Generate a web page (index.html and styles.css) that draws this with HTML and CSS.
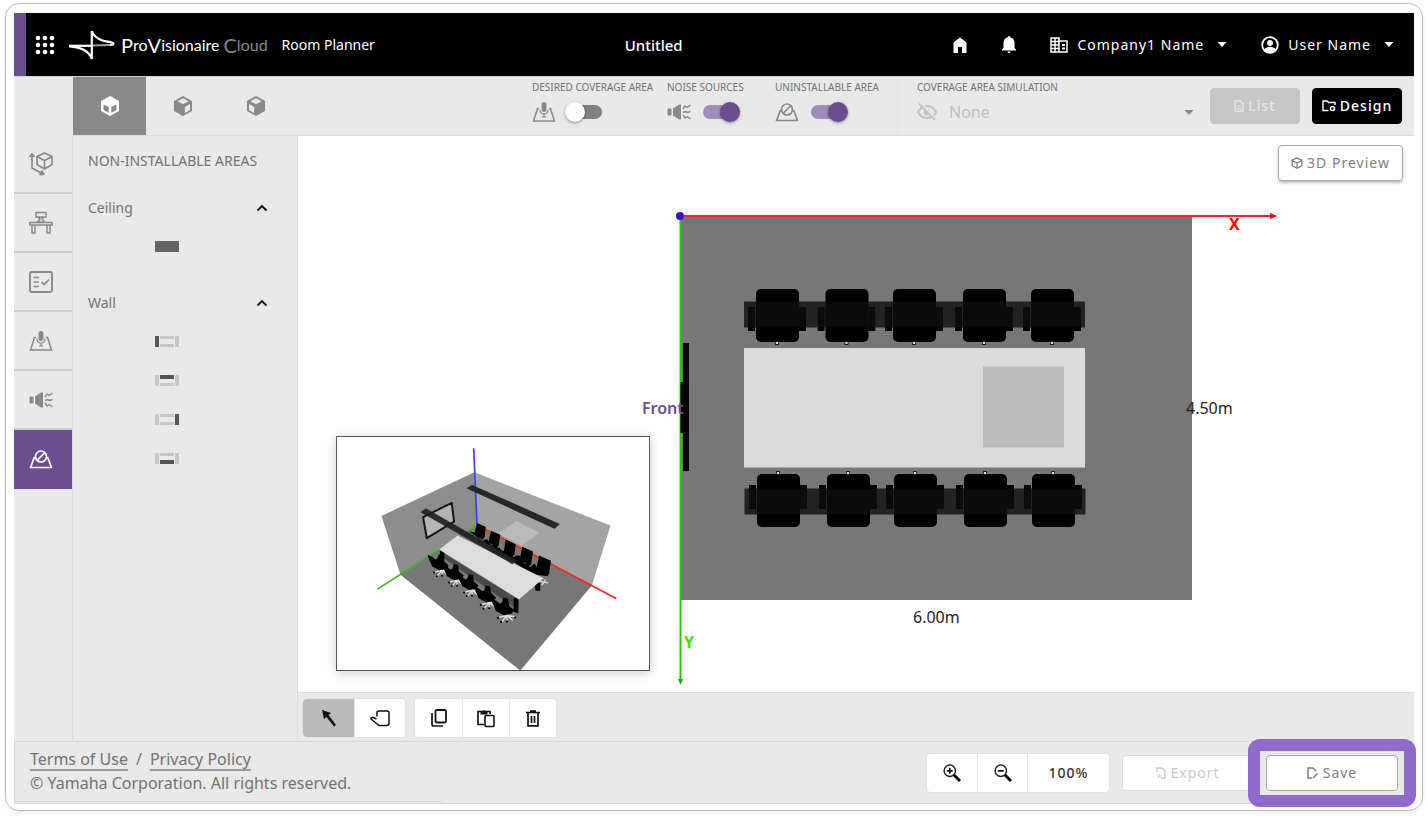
FILE: index.html
```html
<!DOCTYPE html>
<html lang="en">
<head>
<meta charset="utf-8">
<title>Room Planner</title>
<link rel="stylesheet" href="styles.css">
</head>
<body>
<svg class="sprite" aria-hidden="true">
  <symbol id="mic" viewBox="0 0 24 24"><path d="M7 8.500H5.500L1.500 21h21L18.500 8.500H17" fill="none" stroke="currentColor" stroke-width="1.500"/><rect x="9.500" y="2" width="5" height="10" rx="2.500" fill="currentColor"/><path d="M8 9.500c0 6 8 6 8 0M12 14v3M10 17h4" fill="none" stroke="currentColor" stroke-width="1.200"/></symbol>
  <symbol id="noise" viewBox="0 0 24 24"><rect x="0.500" y="8.500" width="4" height="7" rx="1" fill="currentColor"/><path d="M6 8.500L12 4.500h2v15h-2L6 15.500z" fill="currentColor"/><path d="M16 9l2-3 2 1.500L23.500 5M16 12.500l2.500-1 2 1 3-1M16 15l2 3 2-1.500 3.500 2.500" fill="none" stroke="currentColor" stroke-width="1.400"/></symbol>
  <symbol id="blocked" viewBox="0 0 24 24"><path d="M5.500 10L1.500 20.500h21L18.500 10" fill="none" stroke="currentColor" stroke-width="1.700" stroke-linejoin="round"/><circle cx="12" cy="9.500" r="5.500" fill="none" stroke="currentColor" stroke-width="1.700"/><path d="M8.500 13L15.500 6" stroke="currentColor" stroke-width="1.700"/></symbol>
  <symbol id="axes" viewBox="0 0 24 24"><g fill="none" stroke="currentColor" stroke-width="1.600" stroke-linejoin="round"><path d="M15.500 1l7.500 3.500v8L15.500 17 8 12.500v-8zM8 4.500l7.500 4 7.500-4M15.500 8.500V17M3 3v13l11 6"/><path d="M0.500 4.500L3 1l2.500 3.500zM13 18.500l2.500 4-5 .5z" fill="currentColor" stroke-width="1"/></g></symbol>
  <symbol id="desk" viewBox="0 0 24 24"><g fill="none" stroke="currentColor" stroke-width="1.500" stroke-linejoin="round"><path d="M7 1.500h10v4.500H7zM9 6l2 2-2.500 3h7L13 8l2-2M.8 11.500h22.400v2.500H.8zM3 14h3v8H3zM18 14h3v8h-3z"/></g></symbol>
  <symbol id="check" viewBox="0 0 24 24"><rect x="1" y="2" width="22" height="20" rx="1.500" fill="none" stroke="currentColor" stroke-width="1.900"/><path d="M4.500 7.500H10M4.500 12H10M4.500 16.500H10M12.500 12l2.500 2.500 5-5" fill="none" stroke="currentColor" stroke-width="1.700"/></symbol>
  <symbol id="cube-top" viewBox="0 0 20 20"><path d="M10 0l9 5v10l-9 5-9-5V5z" fill="currentColor"/><path d="M3.500 8.500l5.200 2.600v5.700L3.500 14zM16.500 8.500l-5.200 2.600v5.700l5.200-2.800z" fill="#898989"/></symbol>
  <symbol id="cube-left" viewBox="0 0 20 20"><path d="M10 0l9 5v10l-9 5-9-5V5z" fill="currentColor"/><path d="M10 2.200L15.500 5.300 10 8.200 4.500 5.300zM17 8v6.200l-5.200 2.800v-6z" fill="#e9e9e9"/></symbol>
  <symbol id="cube-right" viewBox="0 0 20 20"><path d="M10 0l9 5v10l-9 5-9-5V5z" fill="currentColor"/><path d="M10 2.200L15.500 5.300 10 8.200 4.500 5.300zM3 8v6.200l5.200 2.800v-6z" fill="#e9e9e9"/></symbol>
  <symbol id="wall-left" viewBox="0 0 24 11"><path d="M5 0h14v3H5zM5 8h14v3H5zM20 0h4v11h-4z" fill="#c8c8c8"/><path d="M0 0h4v11H0z" fill="#555"/></symbol>
  <symbol id="wall-top" viewBox="0 0 24 11"><path d="M0 0h4v11H0zM5 8h14v3H5zM20 0h4v11h-4z" fill="#c8c8c8"/><path d="M5 0h14v4H5z" fill="#555"/></symbol>
  <symbol id="wall-right" viewBox="0 0 24 11"><path d="M0 0h4v11H0zM5 0h14v3H5zM5 8h14v3H5z" fill="#c8c8c8"/><path d="M20 0h4v11h-4z" fill="#555"/></symbol>
  <symbol id="wall-bottom" viewBox="0 0 24 11"><path d="M0 0h4v11H0zM5 0h14v3H5zM20 0h4v11h-4z" fill="#c8c8c8"/><path d="M5 7h14v4H5z" fill="#555"/></symbol>
  <symbol id="chevron" viewBox="0 0 12 8"><path d="M1.500 6.500L6 2l4.500 4.500" fill="none" stroke="#111" stroke-width="1.900"/></symbol>
  <symbol id="caret" viewBox="0 0 10 5"><path d="M0.500 0h9L5 5z" fill="currentColor"/></symbol>
  <symbol id="chair" viewBox="0 0 58 56"><path d="M0 18h7v24H0zM51 18h7v24h-7z"/><rect x="8" width="43" height="53" rx="5"/><circle cx="29" cy="54.500" r="2"/><circle cx="29" cy="54" r="1.300" fill="#ddd"/></symbol>
  <symbol id="seat3d" viewBox="0 0 72 76"><path d="M46 48v20M46 54L24 60M46 54l22 4M46 54L32 72M46 54l16 14" fill="none" stroke="#ddd" stroke-width="4"/><path d="M2 8l14 6 10 8 6-2 4-14 12 2 4 20 14 12-8 10-20 4-22-12L8 24z"/><g><circle cx="22" cy="61" r="3"/><circle cx="30" cy="72" r="3"/><circle cx="46" cy="71" r="3"/><circle cx="68" cy="60" r="3"/></g></symbol>
</svg>

<div class="frame">
  <header class="header">
    <div class="brand">
      <button class="plain" aria-label="Apps"><svg width="20" height="20" viewBox="0 0 20 20" fill="#fff"><circle cx="3" cy="3" r="2.300"/><circle cx="10" cy="3" r="2.300"/><circle cx="17" cy="3" r="2.300"/><circle cx="3" cy="10" r="2.300"/><circle cx="10" cy="10" r="2.300"/><circle cx="17" cy="10" r="2.300"/><circle cx="3" cy="17" r="2.300"/><circle cx="10" cy="17" r="2.300"/><circle cx="17" cy="17" r="2.300"/></svg></button>
      <svg class="mark" width="46" height="32" viewBox="0 0 46 32" fill="none" stroke="#fff"><path d="M23 16.500L41 16" stroke="#999" stroke-width="2"/><path d="M0 17.300C10 18 20 20.500 22.800 30V2C25.500 10 34 12 42 13.200C45.500 14 45.500 15.600 41 16" stroke-width="2.200" stroke-linejoin="bevel"/><path d="M0 16.800h23" stroke-width="2.200"/></svg>
      <span class="logo"><span class="logo-name"><b>P</b>ro<b>V</b>isionaire</span><span class="logo-cloud"><b>C</b>loud</span></span>
      <span class="product">Room Planner</span>
    </div>
    <h1 class="title">Untitled</h1>
    <nav class="account">
      <button class="plain" aria-label="Home"><svg width="16" height="16" viewBox="0 0 16 16"><path d="M8 0.500l6.500 5V16h-4.500v-6H6v6H1.500V5.500z" fill="#fff"/></svg></button>
      <button class="plain" aria-label="Notifications"><svg width="14" height="18" viewBox="0 0 14 18"><path d="M5.500 1.500a1.500 1.500 0 0 1 3 0c3 .8 4 3 4 5.500v5l1.500 1.500v1H0v-1L1.500 12V7c0-2.500 1-4.700 4-5.500zM5.500 15.500h3a1.500 1.500 0 0 1-3 0z" fill="#fff"/></svg></button>
      <button class="plain company"><svg width="18" height="16" viewBox="0 0 18 16"><path d="M1 1h8v14H1zM9 4h8v11H9M1 4.500h8M1 8h8M1 11.500h8M5 1v14" fill="none" stroke="#fff" stroke-width="1.500"/><path d="M12 7h3v2h-3zM12 10.500h3v2h-3z" fill="#fff"/></svg><span>Company1 Name</span><svg width="10" height="5"><use href="#caret"/></svg></button>
      <button class="plain user"><svg width="18" height="18" viewBox="0 0 18 18"><circle cx="9" cy="9" r="7.800" fill="none" stroke="#fff" stroke-width="1.800"/><circle cx="9" cy="7" r="2.900" fill="#fff"/><path d="M3 13.500c3-3.600 9-3.600 12 0-3 4-9 4-12 0z" fill="#fff"/></svg><span>User Name</span><svg width="10" height="5"><use href="#caret"/></svg></button>
    </nav>
  </header>

  <div class="toolbar">
    <div class="views">
      <button class="view active" aria-label="Top view"><svg width="20" height="20"><use href="#cube-top"/></svg></button>
      <button class="view" aria-label="Left view"><svg width="20" height="20"><use href="#cube-left"/></svg></button>
      <button class="view" aria-label="Right view"><svg width="20" height="20"><use href="#cube-right"/></svg></button>
    </div>
    <div class="switches">
      <div class="field"><label for="coverage">DESIRED COVERAGE AREA</label><div class="control"><svg width="24" height="24"><use href="#mic"/></svg><input class="switch" type="checkbox" id="coverage"></div></div>
      <div class="field"><label for="sources">NOISE SOURCES</label><div class="control"><svg width="24" height="24"><use href="#noise"/></svg><input class="switch" type="checkbox" id="sources" checked></div></div>
      <div class="field"><label for="area">UNINSTALLABLE AREA</label><div class="control"><svg width="24" height="24"><use href="#blocked"/></svg><input class="switch" type="checkbox" id="area" checked></div></div>
    </div>
    <div class="outputs">
      <div class="field simulation"><label for="sim">COVERAGE AREA SIMULATION</label><div class="control"><svg class="dim" width="20" height="18" viewBox="0 0 20 18"><path d="M1 9c4-8 14-8 18 0-4 8-14 8-18 0z" fill="none" stroke="currentColor" stroke-width="2.400"/><circle cx="10" cy="9" r="3.500" fill="currentColor"/><path d="M3 0l16 16" stroke="#e9e9e9" stroke-width="3"/><path d="M2 0.500l16 16.500" stroke="currentColor" stroke-width="2"/></svg><select id="sim" disabled><option>None</option></select><svg width="10" height="5"><use href="#caret"/></svg></div></div>
      <button class="btn list" disabled><svg width="10" height="12" viewBox="0 0 10 12"><path d="M1 1h5l3 3v7H1z" fill="none" stroke="currentColor" stroke-width="1.500"/><path d="M3 6h4M3 8.500h4" stroke="currentColor"/></svg>List</button>
      <button class="btn design"><svg width="14" height="12" viewBox="0 0 14 12"><path d="M6.500 10.500H1V1h4l1.500 1.500H13V5" fill="none" stroke="currentColor" stroke-width="1.400"/><circle cx="10.500" cy="8.500" r="2" fill="none" stroke="currentColor" stroke-width="1.500"/></svg>Design</button>
    </div>
  </div>

  <main class="workspace">
    <nav class="rail">
      <button class="rail-item" aria-label="Room"><svg width="24" height="24"><use href="#axes"/></svg></button>
      <button class="rail-item" aria-label="Furniture"><svg width="24" height="24"><use href="#desk"/></svg></button>
      <button class="rail-item" aria-label="Requirements"><svg width="24" height="24"><use href="#check"/></svg></button>
      <button class="rail-item" aria-label="Coverage"><svg width="24" height="24"><use href="#mic"/></svg></button>
      <button class="rail-item" aria-label="Noise"><svg width="24" height="24"><use href="#noise"/></svg></button>
      <button class="rail-item active" aria-label="Non-installable areas"><svg width="24" height="24"><use href="#blocked"/></svg></button>
    </nav>

    <aside class="panel">
      <h2>NON-INSTALLABLE AREAS</h2>
      <section>
        <button class="plain fold"><span>Ceiling</span><svg width="12" height="8"><use href="#chevron"/></svg></button>
        <button class="plain shape" aria-label="Ceiling area"><svg width="24" height="11" viewBox="0 0 24 11"><path d="M0 0h24v11H0z" fill="#636363"/></svg></button>
      </section>
      <section>
        <button class="plain fold"><span>Wall</span><svg width="12" height="8"><use href="#chevron"/></svg></button>
        <button class="plain shape" aria-label="Left wall"><svg width="24" height="11"><use href="#wall-left"/></svg></button>
        <button class="plain shape" aria-label="Back wall"><svg width="24" height="11"><use href="#wall-top"/></svg></button>
        <button class="plain shape" aria-label="Right wall"><svg width="24" height="11"><use href="#wall-right"/></svg></button>
        <button class="plain shape" aria-label="Front wall"><svg width="24" height="11"><use href="#wall-bottom"/></svg></button>
      </section>
    </aside>

    <div class="stage">
      <div class="canvas">
        <svg class="plan" viewBox="298 136 1116 556">
          <path d="M680 216h512v384H680z" fill="#777"/>
          <path d="M680 216h590" stroke="#f22" stroke-width="2"/><path d="M1270 213l7 3-7 3z" fill="#f00"/>
          <path d="M680.500 216v464" stroke="#2fc01c" stroke-width="2"/><path d="M678 679h5l-2.500 6z" fill="#20b010"/>
          <circle cx="680" cy="216" r="4" fill="#4010c8"/>
          <path d="M683 343h6v128h-6V433h-2.500v-51H683z"/>
          <path d="M744 348h341v119.500H744z" fill="#dbdbdb"/><path d="M983 366.500h81v81h-81z" fill="#bbb"/>
          <use href="#chair" x="748" y="289" width="58" height="56"/>
          <use href="#chair" x="817.500" y="289" width="58" height="56"/>
          <use href="#chair" x="885" y="289" width="58" height="56"/>
          <use href="#chair" x="955" y="289" width="58" height="56"/>
          <use href="#chair" x="1023" y="289" width="58" height="56"/>
          <g transform="matrix(1 0 0 -1 0 816)">
            <use href="#chair" x="749" y="289" width="58" height="56"/>
            <use href="#chair" x="819" y="289" width="58" height="56"/>
            <use href="#chair" x="886" y="289" width="58" height="56"/>
            <use href="#chair" x="956" y="289" width="58" height="56"/>
            <use href="#chair" x="1024" y="289" width="58" height="56"/>
          </g>
          <path d="M744 301.500h341v26H744zM744.500 488.500h341v26h-341z" fill="#0c0e0d" opacity=".8"/>
          <text x="642" y="414" class="front">Front</text>
          <text x="1186" y="414" class="size">4.50m</text>
          <text x="913" y="623" class="size">6.00m</text>
          <text x="1229" y="230" class="axis-x">X</text>
          <text x="684" y="648" class="axis-y">Y</text>
        </svg>

        <svg class="preview" viewBox="50 36 936 700">
          <path d="M183 273L462 142 470 300 240 450z" fill="#8d8d8d"/>
          <path d="M462 142L871 302 815 482 470 300z" fill="#a4a4a4"/>
          <path d="M470 300L815 482 600 738 240 450z" fill="#777"/>
          <path d="M588 288l70 36-54 38-70-36z" fill="#bbb"/>
          <path d="M460 70L470 300" stroke="#3340f0" stroke-width="5"/>
          <path d="M470 300L888 521" stroke="#f22" stroke-width="5"/>
          <path d="M470 302L171 493" stroke="#35b520" stroke-width="5"/>
          <path d="M308 277L394 234 401 290 319 340z" fill="#b5b5b5" stroke="#151515" stroke-width="6" stroke-linejoin="round"/>
          <path d="M455 180L719 297 703 312 438 190z" fill="#242827"/>
          <path d="M470 294l26 12-4 40-30-16zM512 318l28 12-6 38-30-14zM556 344l30 14-4 38-32-14zM606 366l32 14-6 42-34-16zM656 392l36 16-6 42-38-14z"/>
          <path d="M446 320l24 4 12 20 20 0 10 18 20-2 12 18 20-2 14 16 20 0 14 24 30 0 14 18 20 0 8 20-50-6z"/>
          <path d="M488 346l12-12M532 368l12-10M628 426l14-14M578 396l10-8" stroke="#888" stroke-width="4"/>
          <path d="M658 470l26 4M664 482l12-18" stroke="#ddd" stroke-width="4"/>
          <path d="M642 474h18v24h-14z"/>
          <path d="M358 378L596 524v34L370 400z" fill="#4a4a4a"/>
          <path d="M358 374l14 4v30h-12zM580 520h14v46l-14-6z"/>
          <path d="M412 332L670 460 596 524 356 374z" fill="#dcdcdc"/>
          <path d="M316 250L590 406 576 418 300 262z" fill="#1d1f1f" opacity=".9"/>
          <use href="#seat3d" x="319" y="382" width="72" height="76"/>
          <use href="#seat3d" x="364" y="412" width="72" height="76"/>
          <use href="#seat3d" x="409" y="442" width="72" height="76"/>
          <use href="#seat3d" x="457" y="476" width="78" height="80"/>
          <use href="#seat3d" x="509" y="512" width="80" height="84"/>
        </svg>

        <button class="btn preview-btn"><svg width="12" height="12" viewBox="0 0 12 12"><path d="M6 .8l4.800 2.400v5.400L6 11.200 1.200 8.600V3.200zM1.200 3.500L6 6l4.800-2.500M6 6v5" fill="none" stroke="currentColor" stroke-width="1.300"/></svg>3D Preview</button>
      </div>

      <div class="tools">
        <div class="group">
          <button class="tool wide active" aria-label="Select"><svg width="16" height="18" viewBox="0 0 16 18"><path d="M1 1l9 3-2.500 2L15 16l-2 1.500L5.500 8 3 10z" fill="#111"/></svg></button>
          <button class="tool wide" aria-label="Pan"><svg width="20" height="17" viewBox="0 0 20 17"><path d="M7 6.500V2.500Q7 1 9 1h8q2 0 2 2v10q0 2.500-2.500 2.500H9L1 9q0-2 2-1.500L6.500 9" fill="none" stroke="#111" stroke-width="1.500"/></svg></button>
        </div>
        <div class="group">
          <button class="tool" aria-label="Copy"><svg width="16" height="18" viewBox="0 0 16 18"><rect x="4.500" y="1" width="10.500" height="12.500" rx="1.500" fill="none" stroke="#111" stroke-width="1.800"/><path d="M1 4v11q0 2 2 2h9" fill="none" stroke="#111" stroke-width="1.700"/></svg></button>
          <button class="tool" aria-label="Paste"><svg width="18" height="19" viewBox="0 0 18 19"><path d="M7 15.500H1v-13h12V5" fill="none" stroke="#111" stroke-width="1.700"/><path d="M3.500 2h2.200a1.500 1.500 0 0 1 2.600 0h2.200v3.500h-7z" fill="#111"/><rect x="8" y="6.500" width="9" height="11" rx="1" fill="#fff" stroke="#111" stroke-width="1.600"/></svg></button>
          <button class="tool" aria-label="Delete"><svg width="14" height="17" viewBox="0 0 14 17"><path d="M0 2.500h14M4 1h6M2 3v12.800h10V3M5.500 6v7M8.500 6v7" fill="none" stroke="#111" stroke-width="1.700"/></svg></button>
        </div>
      </div>
    </div>
  </main>

  <footer class="footer">
    <div class="legal">
      <p><a href="#terms">Terms of Use</a><span>/</span><a href="#privacy">Privacy Policy</a></p>
      <p>© Yamaha Corporation. All rights reserved.</p>
    </div>
    <div class="actions">
      <div class="group zoom">
        <button class="tool" aria-label="Zoom in"><svg width="18" height="18" viewBox="0 0 18 18"><circle cx="6.800" cy="6.800" r="5.700" fill="none" stroke="#222" stroke-width="1.500"/><path d="M3.800 6.800h6M6.800 3.800v6" stroke="#111" stroke-width="1.700"/><path d="M11 11l6 6" stroke="#000" stroke-width="2.800"/></svg></button>
        <button class="tool" aria-label="Zoom out"><svg width="18" height="18" viewBox="0 0 18 18"><circle cx="6.800" cy="6.800" r="5.700" fill="none" stroke="#222" stroke-width="1.500"/><path d="M3.800 6.800h6" stroke="#111" stroke-width="1.700"/><path d="M11 11l6 6" stroke="#000" stroke-width="2.800"/></svg></button>
        <button class="tool level">100%</button>
      </div>
      <button class="btn export" disabled><svg width="10" height="12" viewBox="0 0 10 12"><path d="M1 5V1h5l3 3v7H5" fill="none" stroke="currentColor" stroke-width="1.400"/><path d="M1 11l3-3M1.500 8H4v2.500" stroke="currentColor" fill="none"/></svg>Export</button>
      <div class="spotlight"><button class="btn save"><svg width="12" height="12" viewBox="0 0 12 12"><path d="M5 11H1V1h5l3 3M6 11l4.500-4.500" fill="none" stroke="currentColor" stroke-width="1.500"/></svg>Save</button></div>
    </div>
  </footer>
</div>
</body>
</html>
```
FILE: styles.css
```css
* { box-sizing: border-box; }

body {
  margin: 0;
  min-height: 100vh;
  padding: 3px 5px 7px;
  display: grid;
  background: #fff;
  color: #737373;
  font: 14px/20px "Noto Sans", "Open Sans", sans-serif;
}

.sprite { position: absolute; width: 0; height: 0; }

svg { display: block; flex: none; }
h1, h2, p { margin: 0; font-weight: 400; }
button, select { font: inherit; color: inherit; }

.plain {
  display: flex;
  align-items: center;
  padding: 0;
  border: 0;
  background: none;
}

.frame {
  display: grid;
  grid-template-rows: 63px 59px 1fr 63px;
  padding: 9px 8px 6px;
  border: 1px solid #bbb;
  border-radius: 14px;
  box-shadow: 0 2px 5px #0001;
}

/* Header */
.header {
  display: flex;
  align-items: center;
  justify-content: space-between;
  padding-right: 20px;
  border-left: 12px solid #6b4e90;
  background: #000;
  color: #fff;
}
.brand { display: flex; align-items: center; padding-left: 9px; }
.mark { margin: 0 6px 0 14px; }
.logo { display: flex; gap: 4px; font: 16px/24px Lato, sans-serif; }
.logo b { font-size: 20px; line-height: 20px; font-weight: 400; vertical-align: -2px; }
.logo-cloud { color: #888; }
.product { margin-left: 14px; }
.title { font-size: 15px; font-weight: 500; }
.account { display: flex; align-items: center; gap: 34px; padding-left: 20px; }
.company, .user { gap: 9px; letter-spacing: 1px; }
.company span, .user span { margin-right: 4px; }

/* Toolbar */
.toolbar { display: flex; background: #e9e9e9; padding-left: 59px; border-top: 1px solid #d4d4d4; }
.views { display: flex; }
.view {
  display: grid;
  place-items: center;
  width: 73px;
  border: 0;
  background: none;
  color: #898989;
}
.view.active { background: #898989; color: #fff; }
.switches {
  display: grid;
  grid-template-columns: 135px 108px 122px;
  margin-left: auto;
  border-right: 1px solid #e2e2e2;
}
.field label { display: block; margin-top: 2px; font-size: 10px; line-height: 16px; white-space: nowrap; }
.control { display: flex; align-items: center; gap: 12px; height: 34px; color: #898989; }
.switch {
  appearance: none;
  position: relative;
  width: 34px;
  height: 14px;
  margin: 0;
  border-radius: 7px;
  background: #808080;
}
.switch::before {
  content: "";
  position: absolute;
  top: -3px;
  left: -3px;
  width: 20px;
  height: 20px;
  border-radius: 50%;
  background: #fff;
  box-shadow: 0 1px 3px #0006;
}
.switch:checked { background: #a18cba; }
.switch:checked::before { left: 17px; background: #6b4e90; }
.outputs { display: flex; align-items: center; gap: 12px; width: 516px; padding: 0 12px 0 19px; }
.simulation { flex: 1; align-self: start; }
.simulation .control { padding-right: 4px; gap: 8px; }
.simulation .dim { color: #c4c4c4; }
.simulation select {
  appearance: none;
  flex: 1;
  border: 0;
  padding: 0 4px;
  background: none;
  color: #c0c0c0;
  font-size: 16px;
  line-height: 24px;
  opacity: 1;
}

.btn {
  display: flex;
  align-items: center;
  justify-content: center;
  gap: 4px;
  height: 36px;
  padding: 0;
  border: 1px solid #aaa;
  border-radius: 4px;
  background: #fff;
  color: #808080;
  font-size: 14px;
  letter-spacing: 1px;
}
.list, .design { width: 90px; font-weight: 500; }
.list { border-color: #c6c6c6; background: #c6c6c6; color: #e6e6e6; }
.design { border-color: #000; background: #000; color: #fff; }

/* Workspace */
.workspace { display: grid; grid-template-columns: 58px 226px 1fr; background: #e9e9e9; }
.rail-item {
  display: grid;
  place-items: center;
  width: 100%;
  height: 59px;
  padding: 0 4px 0 0;
  border: 0;
  border-bottom: 2px solid #cdcdcd;
  background: none;
  color: #898989;
}
.rail-item.active { border-color: #6b4e90; background: #6b4e90; color: #fff; }
.panel {
  display: flex;
  flex-direction: column;
  gap: 21px;
  padding: 15px;
  border: 1px solid #dcdcdc;
  border-bottom: 0;
}
.panel h2 { font-size: 14px; }
.fold { width: 100%; height: 32px; margin-bottom: 3px; padding-right: 14px; justify-content: space-between; }
.shape { width: 100%; height: 39px; padding-left: 67px; }

.stage { display: flex; flex-direction: column; }
.canvas { position: relative; flex: 1; display: grid; background: #fff; border-top: 1px solid #dcdcdc; }
.plan { width: 100%; height: 100%; min-height: 0; }
.plan text { font-size: 16px; }
.plan .size { fill: #222; }
.plan .front { fill: #6b4e90; font-weight: 600; }
.plan .axis-x { fill: #f00; font-weight: 700; }
.plan .axis-y { fill: #50d800; font-weight: 700; }
.preview {
  position: absolute;
  left: 38px;
  bottom: 21px;
  width: 314px;
  height: 235px;
  border: 1px solid #555;
  background: #fff;
  box-shadow: 0 2px 10px #0003;
}
.preview-btn {
  position: absolute;
  top: 9px;
  right: 11px;
  width: 125px;
  box-shadow: 0 2px 3px #0004;
}

.tools { display: flex; gap: 8px; padding: 5px 4px 3px; border-top: 1px solid #dcdcdc; }
.group { display: flex; height: 40px; border: 1px solid #e2e2e2; border-radius: 5px; background: #fff; overflow: hidden; }
.tool {
  display: grid;
  place-items: center;
  width: 47px;
  padding: 0;
  border: 0;
  background: #fff;
}
.tool + .tool { border-left: 1px solid #e6e6e6; }
.tool.wide { width: 51px; }
.tool.active { background: #bababa; }

/* Footer */
.footer {
  display: flex;
  align-items: center;
  justify-content: space-between;
  padding-right: 15px;
  border: 1px solid #d8d8d8;
  background: #e9e9e9;
}
.legal {
  align-self: start;
  width: 428px;
  padding: 5px 15px 6px;
  border-bottom: 1px solid #d4d4d4;
  font-size: 16px;
  line-height: 24px;
}
.legal a { color: inherit; text-decoration: underline; text-decoration-thickness: 2px; text-underline-offset: 4px; text-decoration-color: #9a9a9a; text-decoration-skip-ink: none; }
.legal span { margin: 0 8px; }
.actions { display: flex; align-items: center; gap: 12px; }
.zoom .tool { width: 50px; }
.zoom .level { width: 82px; color: #333; font-weight: 500; letter-spacing: 1px; }
.export, .save { width: 132px; }
.export { border-color: #ddd; color: #c8c8c8; }
.spotlight { position: relative; }
.spotlight::after {
  content: "";
  position: absolute;
  inset: -16px -18px;
  border: 12px solid #9069cc;
  border-radius: 12px;
  pointer-events: none;
}
```
